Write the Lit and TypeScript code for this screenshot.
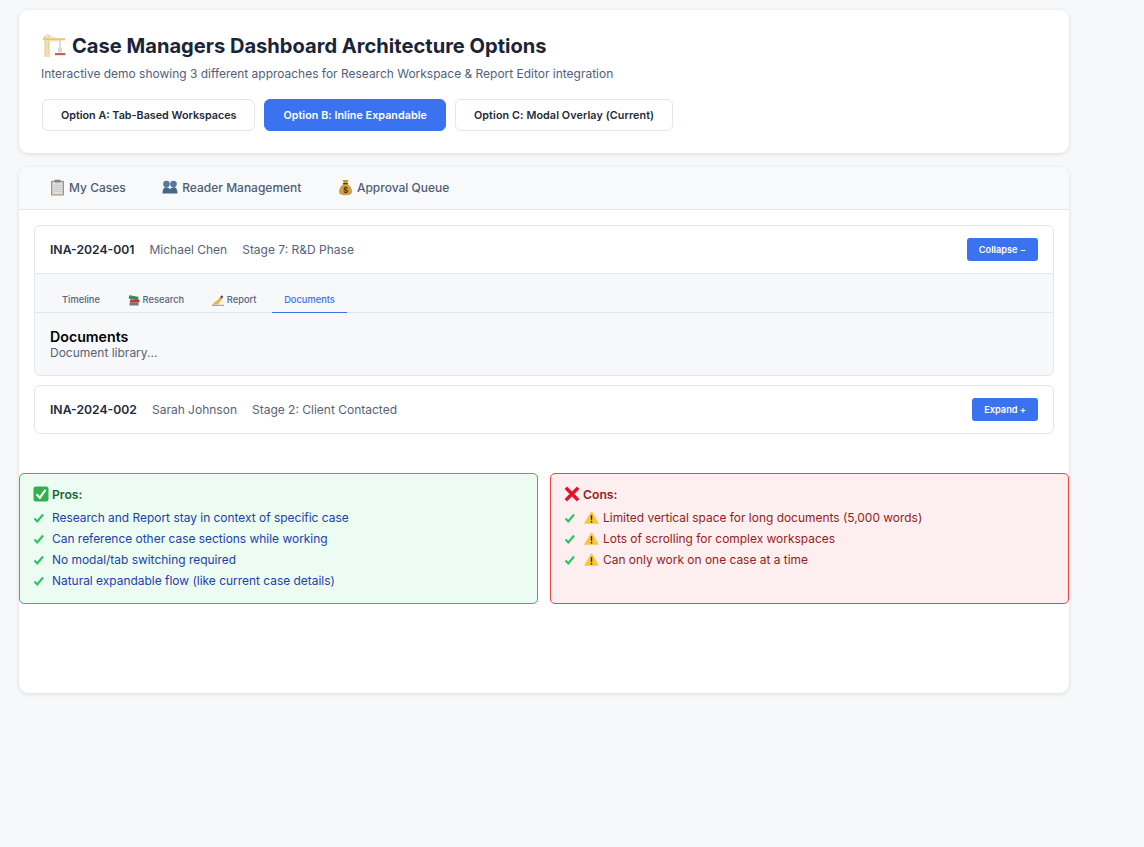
import { LitElement, html, css } from "lit";
import { customElement } from "lit/decorators.js";

const crane = html`<svg class="ic-title" viewBox="0 0 24 24" width="24" height="24"><path d="M2.800 1.500h4.400v21.500H2.800z" fill="#f6e6c2"/><path d="M3 2V23M7 2V23" stroke="#e3c27f" stroke-width=".8"/><path d="M3 8l4 3-4 3 4 3-4 3 4 3M7 8l-4 3 4 3-4 3 4 3" fill="none" stroke="#e6cb93" stroke-width=".6"/><path d="M5 .5 1 4.500M5 .5 13 4.500" stroke="#e0bf7d" stroke-width=".7" fill="none"/><path d="M1 4.200h22v2.200H1z" fill="#e9c67f"/><path d="M2 6.400h15v1H2z" fill="#f0dcae"/><path d="M18 6.400v7" stroke="#9a9a94" stroke-width=".7"/><path d="M16 13.400h4v5h-4z" fill="#d9d8d0"/><path d="M13 19h10.500v2.200H13z" fill="#c8605a"/></svg>`;
const clipboard = html`<svg class="ic" viewBox="0 0 15 17" width="15" height="17"><rect x="1" y="1.800" width="13" height="14.700" rx="1" fill="#b98d62"/><rect x="2.300" y="3" width="10.400" height="12.400" fill="#dcdddf"/><path d="M3.500 6.500h8M3.500 8.500h8M3.500 10.500h8M3.500 12.500h8" stroke="#c3c5c9" stroke-width=".7"/><rect x="4.500" y=".8" width="6" height="2.600" rx=".6" fill="#7c8490"/></svg>`;
const people = html`<svg class="ic" viewBox="0 0 16 14" width="16" height="14"><circle cx="4.500" cy="4" r="3.300" fill="#547a9e"/><circle cx="11.500" cy="4" r="3.300" fill="#547a9e"/><path d="M.5 13.500c0-4.300 1.400-6.200 4-6.200 1.500 0 2.700.7 3.500 2 .8-1.300 2-2 3.500-2 2.600 0 4 1.900 4 6.200z" fill="#44678c"/></svg>`;
const money = html`<svg class="ic" viewBox="0 0 15 17" width="15" height="17"><path d="M4.500 1h6L9 4.200H6z" fill="#c4943a"/><path d="M5.500 5h4c3 2 4.500 5 4.500 7.500 0 2.800-2.500 3.700-6.500 3.700S1 15.300 1 12.500C1 10 2.500 7 5.500 5z" fill="#d3a040"/><rect x="5" y="4" width="5" height="1.300" fill="#5c4218"/><text x="7.500" y="14" font-size="8.500" font-weight="700" text-anchor="middle" fill="#3f2d0c" font-family="Liberation Sans, sans-serif">$</text></svg>`;
const books = html`<svg class="ic-s" viewBox="0 0 12 12" width="12" height="12"><rect x="1.500" y="8.500" width="9" height="3" rx=".5" fill="#6d7a80"/><rect x="2" y="5.500" width="9.500" height="3" rx=".5" fill="#b33c42"/><rect x="1" y="1.800" width="9.500" height="3.500" rx=".5" transform="rotate(10 5 3)" fill="#3f8a56"/></svg>`;
const writing = html`<svg class="ic-s" viewBox="0 0 12 12" width="12" height="12"><path d="M.5 10.500C1.500 9 3 7.500 4.500 7L8 3.200l2.200 1.600L7 9c-1 1.200-2 1.500-3 1.500z" fill="#f1b23e"/><path d="M8 3.500l1.500-2.200 1.800 1.300-1.200 2.200z" fill="#5b5048"/><path d="M0 11.300h12" stroke="#77746e" stroke-width=".8"/></svg>`;
const checkbox = html`<svg class="ic-h" viewBox="0 0 16 16" width="16" height="16"><rect x=".5" y=".5" width="15" height="15" rx="2.500" fill="#31b04f"/><path d="M3.500 8.200 6.800 11.800 12.500 3.800" fill="none" stroke="#fff" stroke-width="2.200"/></svg>`;
const cross = html`<svg class="ic-h" viewBox="0 0 16 16" width="16" height="16"><path d="M1.800 1.800 14.200 14.200M14.200 1.800 1.800 14.200" stroke="#e8112d" stroke-width="3.400" fill="none"/></svg>`;
const warn = html`<svg class="ic-w" viewBox="0 0 16 14" width="15" height="13"><path d="M8 .8 15.200 13.200H.8z" fill="#f9c53c" stroke="#f9c53c" stroke-linejoin="round"/><path d="M8 4.500V9.500" stroke="#222" stroke-width="1.500"/><circle cx="8" cy="11.500" r=".9" fill="#222"/></svg>`;

const pros = [
  "Research and Report stay in context of specific case",
  "Can reference other case sections while working",
  "No modal/tab switching required",
  "Natural expandable flow (like current case details)",
];
const cons = [
  "Limited vertical space for long documents (5,000 words)",
  "Lots of scrolling for complex workspaces",
  "Can only work on one case at a time",
];

@customElement("app-root")
export class AppRoot extends LitElement {
  static styles = css`
    :host {
      display: block;
      box-sizing: border-box;
      width: 1144px;
      min-height: 847px;
      padding: 10px 75px 0 19px;
      background: #f7f8fa;
      font-family: Inter, "Liberation Sans", sans-serif;
      color: #1f2937;
    }
    .card {
      background: #fff;
      border-radius: 9px;
      box-shadow: 0 1px 4px rgba(0, 0, 0, 0.12);
    }
    .head {
      height: 143px;
      box-sizing: border-box;
      padding: 23px 22px 0;
      margin-bottom: 14px;
    }
    h1 {
      display: flex;
      align-items: center;
      gap: 6px;
      margin: 0 0 0 1px;
      font-size: 20.1px;
      line-height: 26px;
      font-weight: 700;
      color: #1a2438;
    }
    .sub {
      margin: 7px 0 0;
      font-size: 11.980px;
      line-height: 16px;
      color: #52607a;
    }
    .opts {
      display: flex;
      gap: 9px;
      margin-top: 17px;
      padding-left: 1px;
    }
    .opt {
      height: 32px;
      box-sizing: border-box;
      padding: 0 18px;
      border: 1px solid #e2e6f0;
      border-radius: 6px;
      background: #fff;
      font: 600 10.750px Inter, sans-serif;
      color: #1f2937;
      display: flex;
      align-items: center;
    }
    .opt.on {
      background: #3b72f0;
      border-color: #3b72f0;
      color: #fff;
      letter-spacing: 0.04px;
    }
    .opt.wide {
      letter-spacing: 0.1px;
    }
    .main {
      height: 526px;
      overflow: hidden;
    }
    .tabs {
      height: 43px;
      box-sizing: border-box;
      background: #f8f9fb;
      border-bottom: 1px solid #e2e6ee;
      display: flex;
      align-items: center;
      padding: 0 0 2px 31px;
      gap: 36.500px;
      font-size: 12px;
      font-weight: 500;
      color: #4f5d75;
    }
    .tab {
      display: flex;
      align-items: center;
      gap: 4px;
    }
    .cases {
      padding: 15px 15px 0;
      display: flex;
      flex-direction: column;
      gap: 9px;
    }
    .case {
      border: 1px solid #e2e6f0;
      border-radius: 6px;
      overflow: hidden;
    }
    .row {
      height: 47px;
      box-sizing: border-box;
      display: flex;
      align-items: center;
      padding: 0 15px;
      gap: 15px;
      font-size: 12px;
      color: #56637a;
    }
    .row b {
      font-size: 12.200px;
      font-weight: 600;
      color: #1f2937;
    }
    .btn {
      margin-left: auto;
      height: 23px;
      padding: 0 12px;
      border-radius: 3px;
      background: #3b72f0;
      color: #fff;
      font-size: 9.200px;
      font-weight: 600;
      display: flex;
      align-items: center;
    }
    .body {
      border-top: 1px solid #e2e6f0;
      background: #f7f8fa;
      height: 101px;
    }
    .itabs {
      height: 39px;
      box-sizing: border-box;
      border-bottom: 1px solid #e2e6f0;
      display: flex;
      align-items: flex-end;
      padding-left: 15px;
      gap: 3.700px;
      font-size: 9.300px;
      font-weight: 500;
      color: #56637a;
    }
    .itab {
      height: 26px;
      box-sizing: border-box;
      padding: 0 12px;
      display: flex;
      align-items: center;
      gap: 3px;
      margin-bottom: -1px;
      border-bottom: 1px solid transparent;
    }
    .itab.on {
      color: #3b72f0;
      border-bottom-color: #3b72f0;
    }
    .pane {
      padding: 16px 15px 0;
    }
    .pane h3 {
      margin: 0;
      font-size: 14.200px;
      line-height: 16px;
      font-weight: 600;
      color: #000;
    }
    .pane p {
      margin: 0;
      font-size: 12px;
      line-height: 15px;
      color: #56637a;
    }
    .cmp {
      display: grid;
      grid-template-columns: 1fr 1fr;
      gap: 12px;
      margin-top: 39px;
    }
    .box {
      height: 131px;
      box-sizing: border-box;
      border: 1px solid #22c55e;
      border-radius: 5px;
      background: #ecfcf3;
      padding: 12px 13px 0;
    }
    .box.bad {
      border-color: #ef4444;
      background: #fdeff0;
    }
    .box h4 {
      display: flex;
      align-items: center;
      gap: 3px;
      margin: 0 0 5px;
      height: 16px;
      font-size: 12.200px;
      font-weight: 600;
      color: #166534;
    }
    .bad h4 {
      color: #991b1b;
    }
    ul {
      list-style: none;
      margin: 0;
      padding: 0;
      font-size: 11.950px;
      color: #1e40af;
    }
    .bad ul {
      color: #991b1b;
    }
    li {
      height: 21px;
      display: flex;
      align-items: center;
      gap: 5px;
    }
    .mark {
      width: 14px;
      flex: none;
    }
    .ic-w {
      margin-right: -1px;
      margin-left: 1px;
    }
  `;

  render() {
    const mark = html`<svg class="mark" viewBox="0 0 14 14" width="14" height="14"><path d="M1.500 7.500 4.300 10.500 10 3.500" fill="none" stroke="#22c55e" stroke-width="2"/></svg>`;
    return html`
      <section class="card head">
        <h1>${crane}<span>Case Managers Dashboard Architecture Options</span></h1>
        <p class="sub">Interactive demo showing 3 different approaches for Research Workspace &amp; Report Editor integration</p>
        <div class="opts">
          <div class="opt">Option A: Tab-Based Workspaces</div>
          <div class="opt on">Option B: Inline Expandable</div>
          <div class="opt wide">Option C: Modal Overlay (Current)</div>
        </div>
      </section>
      <section class="card main">
        <div class="tabs">
          <div class="tab">${clipboard}<span>My Cases</span></div>
          <div class="tab">${people}<span>Reader Management</span></div>
          <div class="tab">${money}<span>Approval Queue</span></div>
        </div>
        <div class="cases">
          <div class="case">
            <div class="row"><b>INA-2024-001</b><span>Michael Chen</span><span>Stage 7: R&amp;D Phase</span><div class="btn">Collapse −</div></div>
            <div class="body">
              <div class="itabs">
                <div class="itab">Timeline</div>
                <div class="itab">${books}<span>Research</span></div>
                <div class="itab">${writing}<span>Report</span></div>
                <div class="itab on">Documents</div>
              </div>
              <div class="pane">
                <h3>Documents</h3>
                <p>Document library...</p>
              </div>
            </div>
          </div>
          <div class="case">
            <div class="row"><b>INA-2024-002</b><span>Sarah Johnson</span><span>Stage 2: Client Contacted</span><div class="btn">Expand +</div></div>
          </div>
        </div>
        <div class="cmp">
          <div class="box">
            <h4>${checkbox}<span>Pros:</span></h4>
            <ul>${pros.map((p) => html`<li>${mark}<span>${p}</span></li>`)}</ul>
          </div>
          <div class="box bad">
            <h4>${cross}<span>Cons:</span></h4>
            <ul>${cons.map((c) => html`<li>${mark}${warn}<span>${c}</span></li>`)}</ul>
          </div>
        </div>
      </section>
    `;
  }
}
